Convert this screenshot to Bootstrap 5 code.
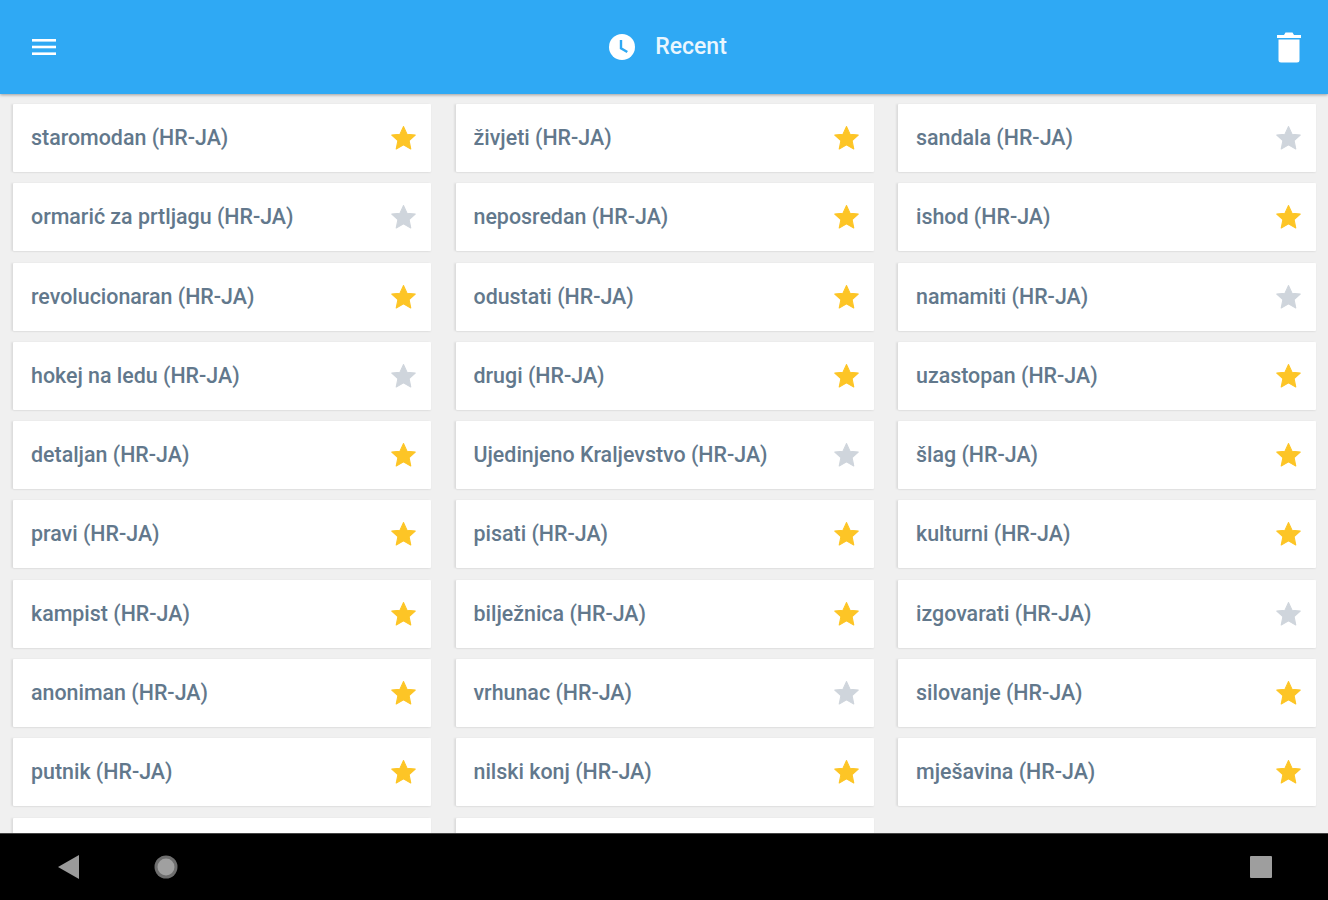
<!DOCTYPE html>
<html lang="en">
<head>
  <meta charset="UTF-8" />
  <meta name="viewport" content="width=device-width, initial-scale=1.0"/>
  <title>Recent</title>
  <link href="https://cdn.jsdelivr.net/npm/bootstrap@5.3.3/dist/css/bootstrap.min.css" rel="stylesheet">
  <style>
    html, body { height: 100%; overflow: hidden; }
    body { background: #f0f0f0; font-family: Roboto, "Liberation Sans", sans-serif; }
    .screen { height: 900px; }
    .top-bar { height: 94px; background: #2fa9f4; padding: 0 26px 0 31px; box-shadow: 0 1px 3px rgba(0,0,0,.35); z-index: 2; flex: none; }
    .top-title { font-size: 23px; font-weight: 500; color: #eaf6fe; gap: 20px; margin-left: 3px; }
    .word-list { flex: 1; min-height: 0; overflow: hidden; padding: 10px 12px 0 13px; display: grid; grid-template-columns: repeat(3, 418px); column-gap: 24.5px; row-gap: 11.3px; grid-auto-rows: 68px; }
    .word-item { flex-direction: row; align-items: center; justify-content: space-between; background: #fff; border: 0; border-radius: 1px; box-shadow: -2px 0 2px rgba(0,0,0,.07), 0 1px 2px rgba(0,0,0,.06); padding: 0 15px 0 18px; font-size: 21.4px; font-weight: 500; color: #62788c; }
    .bottom-bar { height: 67px; background: #000; border-top: 1px solid #444; flex: none; padding: 0 56px 0 58px; }
    .bottom-left { gap: 75px; }
  </style>
</head>
<body>

  <div class="screen d-flex flex-column">
    <!-- Header -->
    <header class="top-bar d-flex align-items-center justify-content-between position-relative">
      <svg width="26" height="26" viewBox="0 0 26 26" fill="#fff"><rect x="1" y="5" width="24" height="2.6"/><rect x="1" y="11.7" width="24" height="2.6"/><rect x="1" y="18.4" width="24" height="2.6"/></svg>
      <div class="top-title d-flex align-items-center">
        <svg width="26" height="26" viewBox="0 0 26 26"><circle cx="13" cy="13" r="13" fill="#fff"/><path d="M12 6v8.2l6.3 3.8" fill="none" stroke="#2fa9f4" stroke-width="2.4"/></svg>
        <span>Recent</span>
      </div>
      <svg width="26" height="32" viewBox="0 0 26 32" fill="#fff"><path d="M1 4h7l1.5-2.5h7L18 4h7v3H1z"/><path d="M2.5 8.500h21V29a2.500 2.500 0 0 1-2.500 2.500H5A2.500 2.500 0 0 1 2.500 29z"/></svg>
    </header>

    <!-- Word list -->
    <main id="wordList" class="word-list"></main>

    <!-- Android nav -->
    <footer class="bottom-bar d-flex align-items-center justify-content-between">
      <div class="bottom-left d-flex align-items-center">
        <svg width="21" height="24" viewBox="0 0 21 24"><path d="M21 0v24L0 12z" fill="#9a9a9a"/></svg>
        <svg width="24" height="24" viewBox="0 0 24 24"><circle cx="12" cy="12" r="11.500" fill="#6e6e6e"/><circle cx="12" cy="12" r="8.500" fill="#a0a0a0"/></svg>
      </div>
      <svg width="22" height="22" viewBox="0 0 22 22"><rect width="22" height="22" rx="1" fill="#9e9e9e"/></svg>
    </footer>
  </div>

  <script>
    const words = [
      ["staromodan", 1], ["živjeti", 1], ["sandala", 0],
      ["ormarić za prtljagu", 0], ["neposredan", 1], ["ishod", 1],
      ["revolucionaran", 1], ["odustati", 1], ["namamiti", 0],
      ["hokej na ledu", 0], ["drugi", 1], ["uzastopan", 1],
      ["detaljan", 1], ["Ujedinjeno Kraljevstvo", 0], ["šlag", 1],
      ["pravi", 1], ["pisati", 1], ["kulturni", 1],
      ["kampist", 1], ["bilježnica", 1], ["izgovarati", 0],
      ["anoniman", 1], ["vrhunac", 0], ["silovanje", 1],
      ["putnik", 1], ["nilski konj", 1], ["mješavina", 1],
      ["", -1], ["", -1]
    ];
    const star = on => `<svg width="25" height="24" viewBox="0 0 24 23"><path d="M12 .5l3.400 7.300 7.900.9-5.900 5.400 1.600 7.900L12 18.100 5 22l1.600-7.900L.7 8.700l7.900-.9z" fill="${on ? "#fdc526" : "#cfd5dc"}" stroke="${on ? "#fdc526" : "#cfd5dc"}" stroke-linejoin="round"/></svg>`;
    document.getElementById("wordList").innerHTML = words.map(([w, on]) =>
      `<div class="word-item card"><span>${w ? w + " (HR-JA)" : ""}</span>${on >= 0 ? star(on) : ""}</div>`
    ).join("");
  </script>
  <script src="https://cdn.jsdelivr.net/npm/bootstrap@5.3.3/dist/js/bootstrap.bundle.min.js"></script>
</body>
</html>
